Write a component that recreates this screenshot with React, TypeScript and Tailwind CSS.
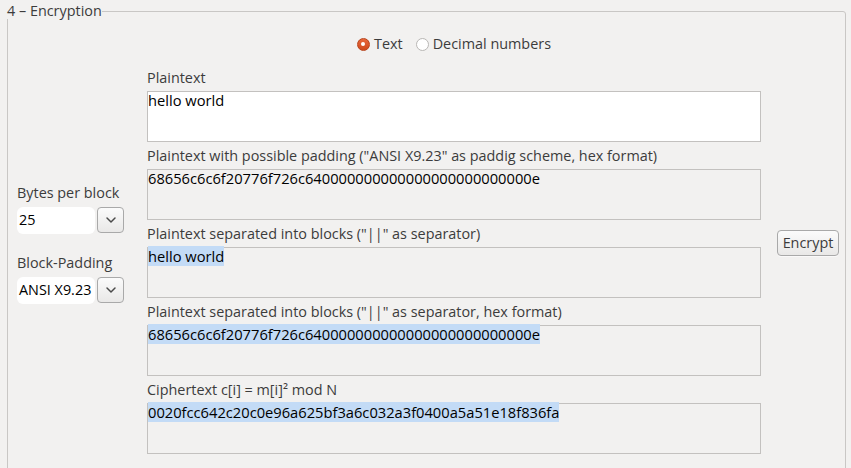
import { ChevronDown } from 'lucide-react';

const font = { fontFamily: '"Open Sans", "Noto Sans", sans-serif' };

function ComboBox({ value }: { value: string }) {
  return (
    <div className="flex items-center gap-[2px]">
      <div className="w-[78px] h-[27px] bg-white rounded-[6px] pl-[2px] flex items-center text-black">
        {value}
      </div>
      <button className="w-[27px] h-[26px] rounded-[4px] border border-[#a9a9a9] bg-gradient-to-b from-[#fbfbfb] to-[#e9e8e7] flex items-center justify-center text-[#4a4a4a]">
        <ChevronDown className="w-[16px] h-[16px]" strokeWidth={2.2} />
      </button>
    </div>
  );
}

function Field({
  label,
  value,
  editable,
  selected,
}: {
  label: string;
  value: string;
  editable?: boolean;
  selected?: boolean;
}) {
  return (
    <div>
      <div className="h-[20px] mt-[4px] mb-[3px] leading-[20px] text-[#3c3c3c]">{label}</div>
      <div
        className={
          'h-[51px] border border-[#c3c1bf] pl-0 pt-0 text-black leading-[17px] text-[14.7px] ' +
          (editable ? 'bg-white' : 'bg-[#f2f1f0]')
        }
      >
        <span className={selected ? 'bg-[#c3dbf6]' : ''}>{value}</span>
      </div>
    </div>
  );
}

export default function App() {
  return (
    <div
      className="w-[851px] h-[468px] overflow-hidden bg-[#f2f1f0] pl-[7px] pr-[5px] pt-[3px] text-[14.4px]"
      style={font}
    >
      <fieldset className="h-[480px] border border-[#c9c7c5] rounded-[3px] p-0 m-0 min-w-0">
        <legend className="p-0 ml-[-1px] leading-[16px] text-[#3c3c3c]">4 – Encryption</legend>
        <div className="h-[448px] flex items-center">
          <div className="w-[139px] pl-[9px] flex flex-col">
            <div className="h-[20px] leading-[20px] mb-[4px] text-[#3c3c3c]">Bytes per block</div>
            <ComboBox value="25" />
            <div className="h-[20px] leading-[20px] mt-[19px] mb-[4px] text-[#3c3c3c]">Block-Padding</div>
            <ComboBox value="ANSI X9.23" />
          </div>

          <div className="w-[614px] self-start flex flex-col">
            <div className="mt-[15px] h-[20px] flex items-center justify-center gap-[5px] text-[#3c3c3c]">
              <label className="flex items-center gap-[4px]">
                <span className="w-[13px] h-[13px] rounded-full bg-gradient-to-b from-[#e8673a] to-[#cf4a1c] border border-[#b8441c] flex items-center justify-center">
                  <span className="w-[4px] h-[4px] rounded-full bg-white" />
                </span>
                Text
              </label>
              <label className="flex items-center gap-[4px] ml-[8px]">
                <span className="w-[13px] h-[13px] rounded-full bg-white border border-[#b9b7b5]" />
                Decimal numbers
              </label>
            </div>
            <div className="mt-[10px]">
              <Field label="Plaintext" value="hello world" editable />
              <Field
                label={'Plaintext with possible padding ("ANSI X9.23" as paddig scheme, hex format)'}
                value="68656c6c6f20776f726c640000000000000000000000000e"
              />
              <Field label={'Plaintext separated into blocks ("||" as separator)'} value="hello world" selected />
              <Field
                label={'Plaintext separated into blocks ("||" as separator, hex format)'}
                value="68656c6c6f20776f726c640000000000000000000000000e"
                selected
              />
              <Field
                label="Ciphertext c[i] = m[i]² mod N"
                value="0020fcc642c20c0e96a625bf3a6c032a3f0400a5a51e18f836fa"
                selected
              />
            </div>
          </div>

          <div className="pl-[16px]">
            <button className="w-[62px] h-[26px] rounded-[4px] border border-[#a9a9a9] bg-gradient-to-b from-[#fbfbfb] to-[#e9e8e7] text-[#3c3c3c] leading-[24px] shadow-[0_1px_0_rgba(255,255,255,0.6)]">
              Encrypt
            </button>
          </div>
        </div>
      </fieldset>
    </div>
  );
}
